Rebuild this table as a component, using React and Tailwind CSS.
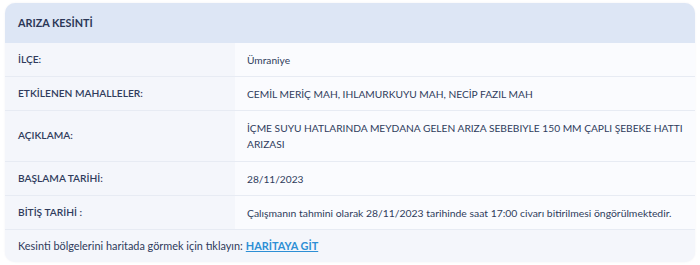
export default function App() {
  const rows = [
    { label: 'İLÇE:', value: 'Ümraniye' },
    { label: 'ETKİLENEN MAHALLELER:', value: 'CEMİL MERİÇ MAH, IHLAMURKUYU MAH, NECİP FAZIL MAH' },
    {
      label: 'AÇIKLAMA:',
      value: 'İÇME SUYU HATLARINDA MEYDANA GELEN ARIZA SEBEBIYLE 150 MM ÇAPLI ŞEBEKE HATTI ARIZASI',
      tall: true,
    },
    { label: 'BAŞLAMA TARİHİ:', value: '28/11/2023' },
    {
      label: 'BİTİŞ TARİHİ :',
      value: 'Çalışmanın tahmini olarak 28/11/2023 tarihinde saat 17:00 civarı bitirilmesi öngörülmektedir.',
      lower: true,
    },
  ];

  return (
    <div className="w-[700px] h-[265px] bg-white pt-[3px] px-[5px] font-['Lato',sans-serif] text-[10.2px] text-[#2f3b5c]">
      <div className="rounded-[10px] overflow-hidden bg-[#f4f6fb] shadow-[0_0_2px_rgba(60,80,130,0.08)]">
        <div className="h-[40px] bg-[#dde6f5] flex items-center px-[13px] text-[10.8px] font-bold text-[#2b3757]">
          ARIZA KESİNTİ
        </div>
        {rows.map((row) => (
          <div key={row.label} className="flex border-b border-[#e7ebf3]">
            <div className="w-[230px] shrink-0 px-[13px] flex items-center font-semibold">
              {row.label}
            </div>
            <div
              className={`flex-1 bg-[#fafbfe] pl-[12px] pr-[6px] flex items-center leading-[16px] ${row.tall ? 'h-[50px]' : 'h-[33px]'} ${row.lower ? 'text-[10.4px]' : ''}`}
            >
              {row.value}
            </div>
          </div>
        ))}
        <div className="h-[32px] flex items-center px-[13px] text-[10.9px]">
          <span>Kesinti bölgelerini haritada görmek için tıklayın:</span>
          <a href="#" className="ml-[3px] font-bold text-[#2d8fd5] underline">
            HARİTAYA GİT
          </a>
        </div>
      </div>
    </div>
  );
}
